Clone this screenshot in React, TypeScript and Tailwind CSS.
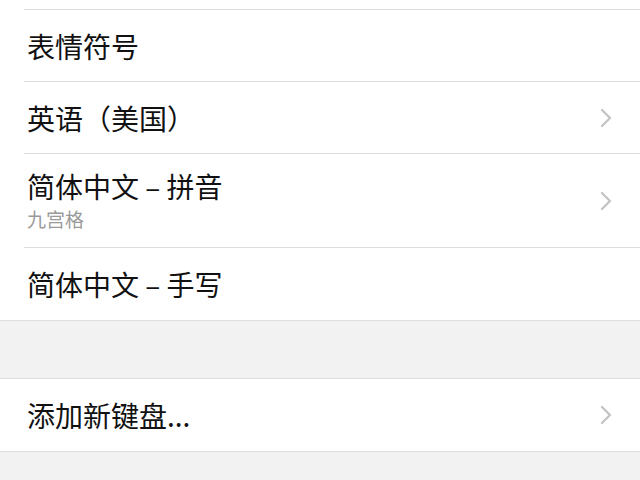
import React from "react";

const font = { fontFamily: '"Noto Sans CJK SC", "Noto Sans", sans-serif' };

function Chevron() {
  return (
    <svg width="12" height="20" viewBox="0 0 12 20" className="shrink-0">
      <path
        d="M2 2 L10 10 L2 18"
        fill="none"
        stroke="#c4c4c8"
        strokeWidth="2.4"
        strokeLinecap="round"
        strokeLinejoin="round"
      />
    </svg>
  );
}

interface RowProps {
  title: string;
  sub?: string;
  arrow?: boolean;
  last?: boolean;
}

function Row({ title, sub, arrow, last }: RowProps) {
  return (
    <div className="pl-[24px] bg-white">
      <div
        className={`flex items-center pr-[28px] ${
          sub ? "h-[94px]" : "h-[72px]"
        } ${last ? "" : "border-b-[1.5px] border-[#dedede]"}`}
      >
        <div className={`flex-1 pl-[3px] ${sub ? "-mt-[2px]" : ""}`}>
          <div className="text-[28px] leading-[34px] text-[#111] whitespace-pre">
            {title}
          </div>
          {sub && (
            <div className="text-[19px] leading-[24px] text-[#9a9a9a] mt-[4px]">
              {sub}
            </div>
          )}
        </div>
        {arrow && <Chevron />}
      </div>
    </div>
  );
}

export default function App() {
  return (
    <div className="w-[640px] h-[480px] overflow-hidden bg-[#f2f2f2]" style={font}>
      <div className="bg-white border-b-[1.5px] border-[#dedede]">
        <div className="pl-[24px]">
          <div className="h-[10px] border-b-[1.5px] border-[#dedede]" />
        </div>
        <Row title="表情符号" />
        <Row title="英语（美国）" arrow />
        <Row title="简体中文 – 拼音" sub="九宫格" arrow />
        <Row title="简体中文 – 手写" last />
      </div>
      <div className="h-[57px]" />
      <div className="bg-white border-y-[1.5px] border-[#dedede]">
        <Row title="添加新键盘..." arrow last />
      </div>
    </div>
  );
}
